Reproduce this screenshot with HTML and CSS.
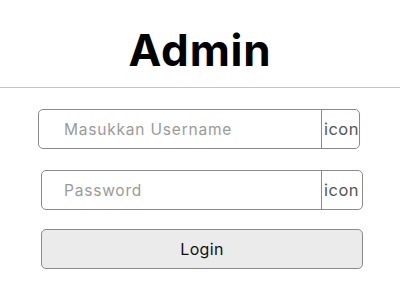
FILE: index.html
```html
<!DOCTYPE html>
<html lang="id">
<head>
<meta charset="utf-8">
<title>Admin</title>
<link rel="stylesheet" href="styles.css">
</head>
<body>
<header class="header">
  <h1 class="title">Admin</h1>
</header>
<hr class="divider">
<form class="form">
  <div class="field field-user">
    <input class="input input-user" type="text" placeholder="Masukkan Username">
    <span class="icon icon-user">icon</span>
  </div>
  <div class="field field-pass">
    <input class="input input-pass" type="password" placeholder="Password">
    <span class="icon">icon</span>
  </div>
  <button class="btn" type="button">Login</button>
</form>
</body>
</html>
```
FILE: styles.css
```css
* { box-sizing: border-box; }
html, body { margin: 0; padding: 0; background: #fff; }
body {
  width: 400px;
  height: 300px;
  overflow: hidden;
  font-family: Inter, "Open Sans", sans-serif;
}
.header {
  display: flex;
  justify-content: center;
  padding-top: 24px;
}
.title {
  margin: 0;
  font-size: 44px;
  line-height: 52px;
  font-weight: 700;
  color: #000;
  letter-spacing: 0.8px;
}
.divider {
  margin: 11px 0 0 0;
  border: 0;
  height: 1px;
  background: #c4c4c4;
}
.form {
  display: flex;
  flex-direction: column;
  padding-top: 21px;
  gap: 20px;
}
.field {
  display: flex;
  width: 322px;
  height: 40px;
  border: 1px solid #8a8a8a;
  border-radius: 5px;
  overflow: hidden;
  margin-left: 41px;
}
.field-user { margin-left: 38px; margin-bottom: 1px; }
.input {
  width: 283px;
  border: 0;
  border-right: 1px solid #8a8a8a;
  outline: none;
  padding: 0 0 0 25px;
  font-family: inherit;
  font-size: 15.5px;
  letter-spacing: 0.8px;
  color: #333;
  background: transparent;
}
.input-pass { width: 280px; padding-left: 22px; }
.input::placeholder { color: #9a9a9a; }
.icon {
  flex: 1;
  display: flex;
  align-items: center;
  padding-left: 2px;
  font-size: 16.5px;
  letter-spacing: 0.5px;
  color: #555;
}
.btn {
  margin-left: 41px;
  width: 322px;
  height: 40px;
  margin-top: -1px;
  border: 1px solid #8a8a8a;
  border-radius: 5px;
  background: #ebebeb;
  font-family: inherit;
  font-size: 16px;
  letter-spacing: 0.3px;
  color: #111;
}
```
